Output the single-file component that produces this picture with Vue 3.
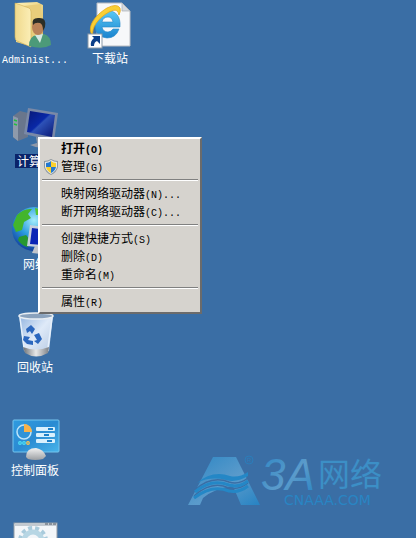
<template>
    <main class="desktop">
        <svg class="defs" width="0" height="0" aria-hidden="true">
            <defs>
                <linearGradient id="folderBack" x1="0" y1="0" x2="1" y2="1">
                    <stop offset="0" stop-color="#fff2b8" /><stop offset="1" stop-color="#d9b95c" />
                </linearGradient>
                <linearGradient id="folderFront" x1="0" y1="0" x2="1" y2="0">
                    <stop offset="0" stop-color="#f0d98c" /><stop offset="1" stop-color="#fbeeb6" />
                </linearGradient>
                <linearGradient id="screen" x1="0" y1="0" x2="1" y2="1">
                    <stop offset="0" stop-color="#0a1c8c" /><stop offset=".45" stop-color="#0b2fc4" />
                    <stop offset=".5" stop-color="#3560d8" /><stop offset="1" stop-color="#0a1a86" />
                </linearGradient>
                <radialGradient id="globe" cx=".5" cy=".3" r=".7">
                    <stop offset="0" stop-color="#a5ecfb" /><stop offset=".5" stop-color="#2b9de0" />
                    <stop offset="1" stop-color="#123f9c" />
                </radialGradient>
                <linearGradient id="bin" x1="0" y1="0" x2="1" y2="1">
                    <stop offset="0" stop-color="#8fb2df" /><stop offset=".5" stop-color="#dfeaf8" />
                    <stop offset="1" stop-color="#b4c8e2" />
                </linearGradient>
                <linearGradient id="binBase" x1="0" y1="0" x2="1" y2="0">
                    <stop offset="0" stop-color="#6b7075" /><stop offset=".5" stop-color="#e8e8e8" />
                    <stop offset="1" stop-color="#7b8086" />
                </linearGradient>
                <linearGradient id="panel" x1="0" y1="0" x2="1" y2="1">
                    <stop offset="0" stop-color="#2f9be0" /><stop offset=".5" stop-color="#2a8bd2" />
                    <stop offset="1" stop-color="#48b4ea" />
                </linearGradient>
                <linearGradient id="mouse" x1="0" y1="0" x2="0" y2="1">
                    <stop offset="0" stop-color="#f2f2f2" /><stop offset="1" stop-color="#9c9fa3" />
                </linearGradient>
                <linearGradient id="ie" x1="0" y1="0" x2="0" y2="1">
                    <stop offset="0" stop-color="#58c8f5" /><stop offset="1" stop-color="#1a84cf" />
                </linearGradient>
                <linearGradient id="mark" x1="0" y1="0" x2="1" y2="1">
                    <stop offset="0" stop-color="#2c86c4" /><stop offset=".55" stop-color="#5b9bcb" />
                    <stop offset="1" stop-color="#2683c3" />
                </linearGradient>
            </defs>
        </svg>

        <div class="icons">
            <a v-for="item in shortcuts" :key="item.id" href="#" class="shortcut" :class="{ selected: item.id === 'computer' }" @click.prevent>
                <svg v-if="item.id === 'user'" class="icon" viewBox="0 0 50 50">
                    <path d="M6 3 L27 2 L33 5 V41 L20 46 L6 42 Z" fill="url(#folderBack)" />
                    <path d="M13 6 L31 4 V37 L19 43 Z" fill="#e8cd7b" />
                    <path d="M5 3 L19 8 Q21 9 21 12 V47 L7 41 Q5 40 5 37 Z" fill="url(#folderFront)" stroke="#cfae55" stroke-width=".6" />
                    <path d="M19 46 Q19 36 27 35 L34 34 Q41 36 41 45 Q33 50 19 46 Z" fill="#4c9a79" />
                    <path d="M25 35 L33 34 L30 43 Z" fill="#d7e8e2" />
                    <ellipse cx="28" cy="27" rx="6" ry="8" fill="#b98258" />
                    <path d="M23 25 Q21 18 28 18 Q37 17 35 27 L33 31 Q33 24 30 23 Q25 22 23 25 Z" fill="#2c2e26" />
                </svg>

                <svg v-else-if="item.id === 'download'" class="icon" viewBox="0 0 50 50">
                    <path d="M12 3 H37 L45 11 V46 H12 Z" fill="#f7f8fa" stroke="#b8bcc2" />
                    <path d="M37 3 V11 H45 Z" fill="#d5d9de" stroke="#aab0b6" stroke-width=".7" />
                    <path fill-rule="evenodd" d="M22 11 C30 10 36 16 35 27 H17 Q18 32 23 32 Q26 32 28 29 H34 Q31 38 22 38 Q10 37 10 25 Q11 12 22 11 Z M17 22 H28 Q27 17 23 17 Q18 17 17 22 Z" fill="url(#ie)" stroke="#2588c8" stroke-width=".6" />
                    <path d="M8 36 C1 28 9 16 22 8 Q32 3 35 8 Q36 11 34 15 Q33 7 24 12 C13 18 6 28 8 36 Z" fill="#f9cf34" stroke="#eaa916" stroke-width=".8" />
                    <rect x="3" y="34" width="14" height="14" fill="#fff" stroke="#8c9aa8" />
                    <path d="M7 36 H15 V44 L12 41 Q9 42 9 46 H6 Q5 41 9 38 Z" fill="#0c3f88" />
                </svg>

                <svg v-else-if="item.id === 'computer'" class="icon" viewBox="0 0 50 50">
                    <path d="M3 13 L10 8 L18 10 V34 L8 38 L3 34 Z" fill="#7c8ba5" />
                    <path d="M3 13 L8 15 V38 L3 34 Z" fill="#a7b5c9" />
                    <path d="M4 17 L7 18 M4 21 L7 22" stroke="#28e04c" stroke-width="1.5" />
                    <path d="M26 34 L34 36 L38 43 Q31 47 20 42 L27 40 Z" fill="#a9b3c6" />
                    <path d="M18 5 L48 10 L44 38 L14 31 Z" fill="#8fa1c4" />
                    <path d="M20 8 L45 12 L42 34 L17 29 Z" fill="url(#screen)" />
                </svg>

                <svg v-else-if="item.id === 'network'" class="icon" viewBox="0 0 50 50">
                    <circle cx="24" cy="23" r="22" fill="url(#globe)" />
                    <path d="M7 9 Q14 2 22 3 L18 8 L21 12 L14 16 L12 24 L6 26 L3 19 Z" fill="#43b52c" />
                    <path d="M25 2 L37 5 L43 14 L35 13 L31 9 L26 9 Z" fill="#55c535" />
                    <path d="M9 31 L16 29 L20 34 L18 41 Q12 40 8 34 Z" fill="#279830" />
                    <path d="M20 19 L48 23 V43 L17 40 Z" fill="#c6cfdd" />
                    <path d="M22 22 L46 25 V40 L20 38 Z" fill="#0a24b5" />
                    <path d="M25 40 L36 42 L40 49 L22 47 Z" fill="#c2c5ca" />
                </svg>

                <svg v-else-if="item.id === 'bin'" class="icon" viewBox="0 0 50 50">
                    <path d="M9 6 H43 L39 42 Q26 49 14 42 Z" fill="url(#bin)" />
                    <path d="M10 9 L14 39 M42 9 L38 39" stroke="#e6f0fb" stroke-width="1.5" />
                    <path d="M13 38 Q26 43 39 38 L38 44 Q26 51 15 44 Z" fill="url(#binBase)" />
                    <ellipse cx="26" cy="7" rx="17" ry="3" fill="#8aa2bd" stroke="#e9eef3" stroke-width="1.5" />
                    <path d="M16 20 L21 16 L25 20 L22 25 L20 22 L17 24 Z M24 26 L29 24 L32 30 L28 35 L24 32 L27 31 Z M14 27 L20 28 L18 31 L23 32 V36 L17 35 L13 31 Z" fill="#2b67be" />
                </svg>

                <svg v-else-if="item.id === 'control'" class="icon" viewBox="0 0 50 50">
                    <rect x="3" y="8" width="46" height="32" rx="1" fill="url(#panel)" stroke="#75c5ee" />
                    <circle cx="14" cy="20" r="7" fill="#2f93d8" stroke="#bce4fa" stroke-width="1.5" />
                    <path d="M14 20 V12 A8 8 0 0 1 22 20 Z" fill="#f7b24a" />
                    <g fill="#d8f0fd">
                        <rect x="26" y="15" width="19" height="4" rx="1" />
                        <rect x="26" y="21" width="19" height="4" rx="1" />
                        <rect x="26" y="27" width="19" height="4" rx="1" />
                    </g>
                    <path d="M38 17 H43 M34 23 H39 M37 29 H42" stroke="#1e80c8" stroke-width="2" />
                    <g fill="none" stroke-width="1.2">
                        <circle cx="10" cy="31" r="1.3" stroke="#4ee0f5" /><circle cx="14" cy="31" r="1.3" stroke="#4ee0f5" />
                        <circle cx="18" cy="31" r="1.3" stroke="#ffc64d" />
                    </g>
                    <path d="M16 45 Q16 36 26 36 Q33 37 36 44 L33 47 Q25 49 18 47 Z" fill="url(#mouse)" />
                </svg>

                <svg v-else class="icon" viewBox="0 0 50 50">
                    <rect x="4" y="8" width="43" height="42" fill="#f3f6f9" stroke="#929ba5" />
                    <path d="M5 10 H46" stroke="#c2c9d0" stroke-width="2" />
                    <path d="M35 9 H38 M39 9 H42 M43 9 H46" stroke="#515b66" />
                    <circle cx="23" cy="26" r="13" fill="none" stroke="#a9cbdc" stroke-width="4" stroke-dasharray="4 3" />
                    <circle cx="23" cy="26" r="9" fill="none" stroke="#b7d6e4" stroke-width="5" />
                </svg>

                <span class="label"><span v-if="item.latin" class="latin">{{ item.latin }}</span>{{ item.name }}</span>
            </a>
        </div>

        <svg class="watermark" viewBox="0 0 200 60" role="img" aria-label="3A网络 CNAAA.COM">
            <path d="M1 50 L26 2 H49 L73 50 H54 L46 31 Q28 33 16 43 L13 50 Z" fill="url(#mark)" />
            <path d="M10 28 Q25 15 43 21 Q52 23 61 17 L61 21 Q49 28 39 25 Q23 21 10 28 Z" fill="#2487c6" />
            <path d="M8 35 Q24 20 42 27 Q52 30 61 23 M7 41 Q25 25 42 33 Q52 35 61 28" fill="none" stroke="#3a6ea5" stroke-width="1.5" />
            <path d="M8 37 Q24 23 42 30 Q52 33 61 26 M7 43 Q25 29 42 36 Q52 38 61 31" fill="none" stroke="#2487c6" stroke-width="3" />
            <circle cx="62" cy="5" r="4" fill="none" stroke="#2b7dba" />
            <text x="60" y="7" class="mark-reg">R</text>
            <text x="74" y="35" class="mark-latin">3A</text>
            <text x="131" y="31" class="mark-name">网络</text>
            <text x="97" y="50" class="mark-site">CNAAA.COM</text>
        </svg>

        <div class="menu" role="menu">
            <template v-for="(group, i) in menuGroups" :key="i">
                <hr v-if="i > 0">
                <button v-for="entry in group" :key="entry.key" type="button" role="menuitem" :class="{ main: entry.main }">
                    <span class="gutter">
                        <svg v-if="entry.shield" class="shield" viewBox="0 0 14 16" aria-hidden="true">
                            <path d="M7 0 Q10 2 14 2 V8 Q13 13 7 16 Q1 13 0 8 V2 Q4 2 7 0 Z" fill="#8e989e" />
                            <path d="M7 1 Q10 3 13 3 V8 Q12 12 7 15 Q2 12 1 8 V3 Q4 3 7 1 Z" fill="#e6e9eb" />
                            <path d="M7 2 V8 H2 V4 Q5 4 7 2 Z M7 8 H12 Q11 12 7 14 Z" fill="#2479d0" />
                            <path d="M7 2 Q9 4 12 4 V8 H7 Z M2 8 H7 V14 Q3 12 2 8 Z" fill="#fbd12d" />
                        </svg>
                    </span>
                    <span>{{ entry.text }}<span class="latin">({{ entry.key }}){{ entry.tail }}</span></span>
                </button>
            </template>
        </div>
    </main>
</template>

<script setup>
const shortcuts = [
    { id: 'user',     latin: 'Administ...', name: '' },
    { id: 'computer', name: '计算机' },
    { id: 'network',  name: '网络' },
    { id: 'bin',      name: '回收站' },
    { id: 'control',  name: '控制面板' },
    { id: 'settings', name: '' },
    { id: 'download', name: '下载站' },
];

const menuGroups = [
    [
        { text: '打开', key: 'O', main: true },
        { text: '管理', key: 'G', shield: true },
    ],
    [
        { text: '映射网络驱动器', key: 'N', tail: '...' },
        { text: '断开网络驱动器', key: 'C', tail: '...' },
    ],
    [
        { text: '创建快捷方式', key: 'S' },
        { text: '删除', key: 'D' },
        { text: '重命名', key: 'M' },
    ],
    [
        { text: '属性', key: 'R' },
    ],
];
</script>

<style>
body {
    background: #3a6ea5;
}
</style>

<style scoped>
.desktop {
    position: relative;
    height: 100vh;
    overflow: hidden;
    background: #3a6ea5;
    font-family: "Noto Sans CJK SC", sans-serif;
    font-size: 12px;
    line-height: 14px;
}
.defs { position: absolute; }
.latin {
    font-family: "Liberation Mono", monospace;
    font-size: 10px;
}
.icons {
    display: grid;
    grid-auto-flow: column;
    grid-template-rows: repeat(6, 103px);
    grid-auto-columns: 70px;
    justify-content: start;
    column-gap: 5px;
}
.shortcut {
    display: flex;
    flex-direction: column;
    align-items: center;
    gap: 1px;
    color: #fff;
    text-decoration: none;
    white-space: nowrap;
}
.icon {
    width: 50px;
    height: 50px;
}
.label { padding: 0 2px; }
.selected .label { background: #0a246a; }
.selected .icon { filter: brightness(.85); }

.menu {
    position: absolute;
    left: 38px;
    top: 137px;
    display: flex;
    flex-direction: column;
    min-width: 164px;
    box-sizing: border-box;
    padding: 1px 2px;
    background: #d6d3ce;
    border: 2px solid;
    border-color: #fff #6b6b6b #6b6b6b #fff;
}
.menu button {
    display: flex;
    align-items: center;
    height: 18px;
    padding: 0;
    border: 0;
    background: none;
    color: #000;
    font: inherit;
    white-space: nowrap;
}
.menu .main { font-weight: 700; }
.menu hr {
    width: 100%;
    height: 1px;
    margin: 3px 0 4px;
    border: 0;
    border-top: 1px solid #808080;
    background: #fff;
}
.gutter {
    display: flex;
    width: 17px;
    padding-left: 2px;
}
.shield {
    width: 14px;
    height: 16px;
}

.watermark {
    position: absolute;
    right: 29px;
    bottom: 23px;
    width: 200px;
    height: 60px;
    overflow: visible;
}
.mark-latin {
    fill: url(#mark);
    font-family: "Liberation Sans", sans-serif;
    font-size: 44px;
    font-style: italic;
}
.mark-name {
    fill: #3c8fc6;
    font-size: 32px;
}
.mark-site {
    fill: #2985c3;
    font-family: "DejaVu Sans", sans-serif;
    font-size: 14px;
}
.mark-reg {
    fill: #2b7dba;
    font-family: "Liberation Sans", sans-serif;
    font-size: 6px;
}
</style>
